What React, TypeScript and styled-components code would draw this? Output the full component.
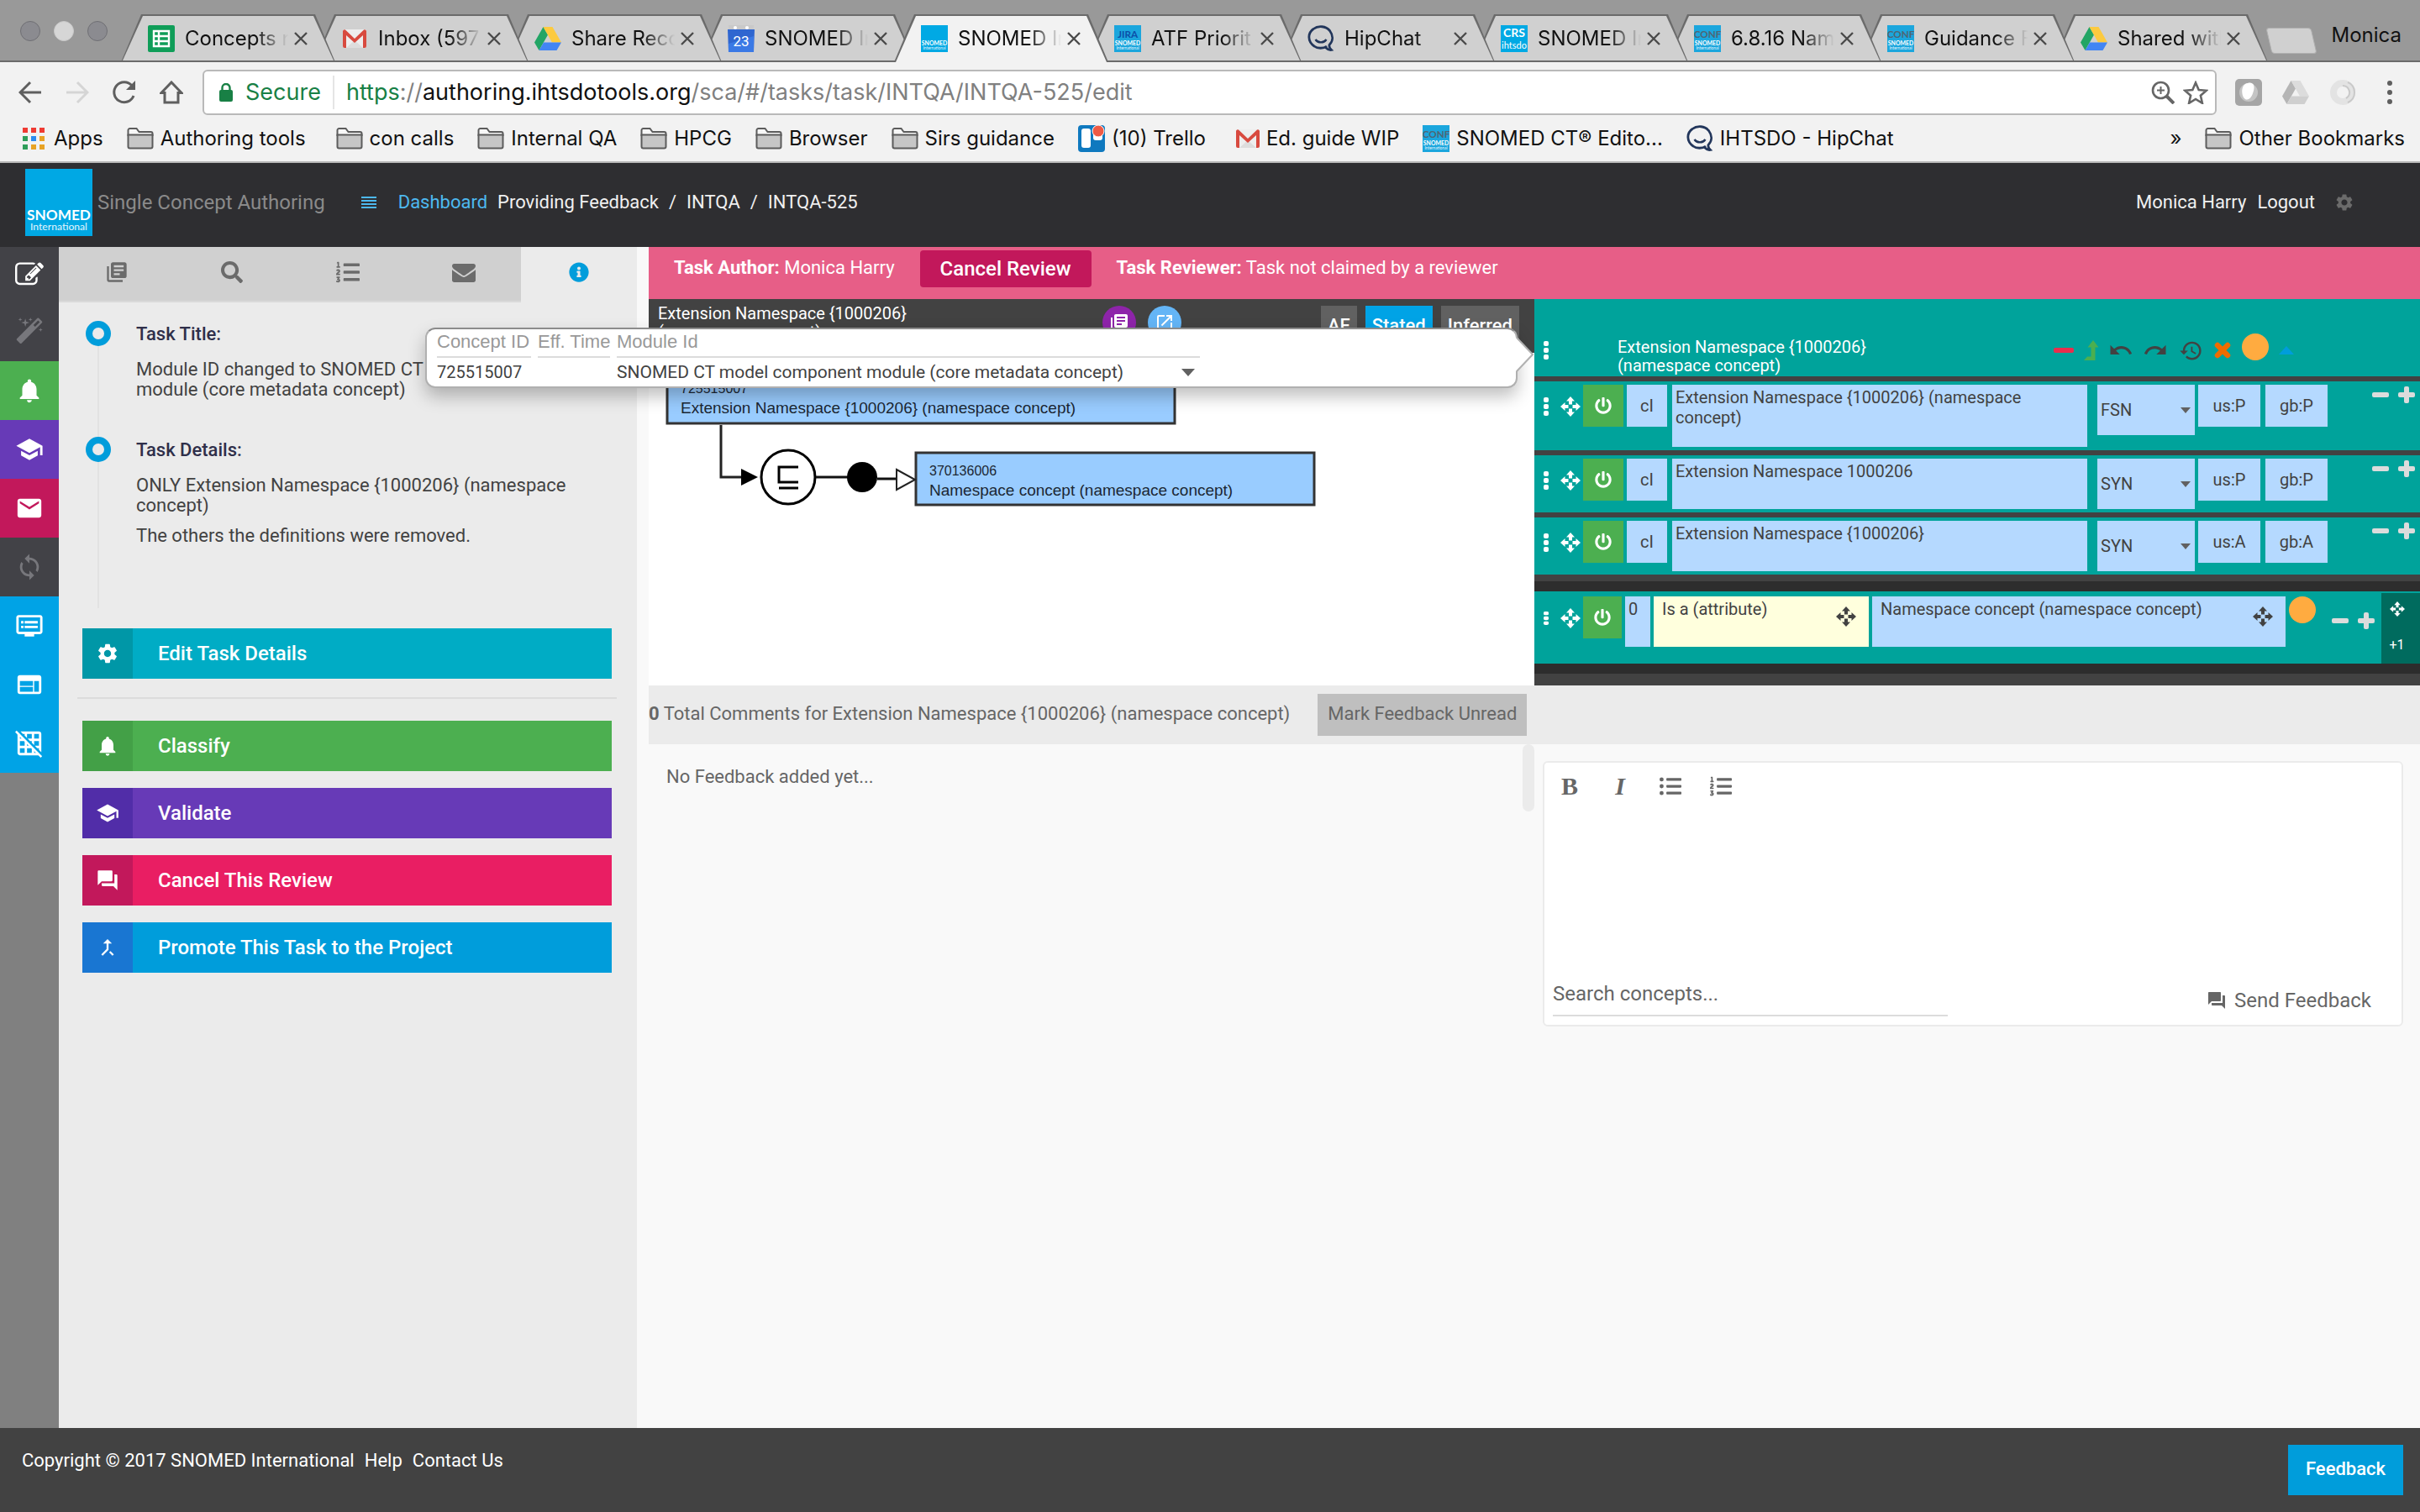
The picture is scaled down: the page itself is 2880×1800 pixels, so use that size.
import React from "react";
import styled, { createGlobalStyle } from "styled-components";
import {
  MdCallMerge,
  MdDvr,
  MdEmail,
  MdGridOff,
  MdHistory,
  MdLibraryBooks,
  MdNotifications,
  MdOpenInNew,
  MdQuestionAnswer,
  MdRedo,
  MdSchool,
  MdSettings,
  MdSync,
  MdUndo,
  MdWeb,
} from "react-icons/md";
import { FaInfoCircle, FaListOl, FaListUl, FaPowerOff, FaSearch } from "react-icons/fa";

const color = {
  teal: "#00a39b",
  tealDark: "#006b5e",
  green: "#4caf50",
  purple: "#673ab7",
  pink: "#c2185b",
  blue: "#00a3e6",
  field: "#b5d9ff",
  ink: "#424242",
  night: "#2d2d2d",
  panel: "#ebebeb",
};

const roboto = `Roboto, "Liberation Sans", sans-serif`;
const inter = `Inter, Roboto, sans-serif`;

const GlobalStyle = createGlobalStyle`
  *, *::before, *::after { box-sizing: border-box; }
  body { margin: 0; background: #f9f9f9; font-family: ${roboto}; font-size: 22px; line-height: 24px; color: ${color.ink}; }
  button, input, select, textarea { font: inherit; color: inherit; border: 0; border-radius: 0; margin: 0; padding: 0; background: none; outline: none; }
  button { display: inline-flex; align-items: center; justify-content: center; flex: none; white-space: nowrap; cursor: pointer; }
  a { color: inherit; text-decoration: none; }
  svg { display: block; flex: none; }
  p, h1, h2, h3, ul { margin: 0; padding: 0; list-style: none; font-size: inherit; font-weight: inherit; }
`;

const Page = styled.div`
  display: flex;
  flex-direction: column;
  min-height: 100vh;
`;

/* ---------- browser window ---------- */

const Chrome = styled.header`
  font-family: ${inter};
  color: #111;
  background: #f2f2f2;
`;

const TabStrip = styled.div`
  display: flex;
  align-items: flex-end;
  height: 74px;
  background: #999;
  box-shadow: inset 0 -2px 0 #6b6b6b;
`;

const Lights = styled.div`
  display: flex;
  gap: 16px;
  align-self: center;
  width: 169px;
  padding-left: 24px;
`;

const Light = styled.span<{ $fill: string; $edge: string }>`
  width: 24px;
  height: 24px;
  border-radius: 50%;
  border: 1px solid ${(p) => p.$edge};
  background: ${(p) => p.$fill};
`;

const Tab = styled.div<{ $active?: boolean; $z: number }>`
  position: relative;
  z-index: ${(p) => p.$z};
  display: flex;
  align-items: center;
  width: 255px;
  height: 57px;
  margin-left: -25px;
  padding: 0 33px 0 32px;
  font-size: 24px;
  background: #6b6b6b;
  clip-path: polygon(24px 0, 231px 0, 255px 100%, 0 100%);
  &::before {
    content: "";
    position: absolute;
    inset: 0;
    z-index: -1;
    background: ${(p) => (p.$active ? "#f2f2f2" : "#d0d0d0")};
    clip-path: polygon(
      26px 2px,
      229px 2px,
      253px ${(p) => (p.$active ? "100%" : "calc(100% - 2px)")},
      2px ${(p) => (p.$active ? "100%" : "calc(100% - 2px)")}
    );
  }
`;

const TabIcon = styled.span`
  display: grid;
  place-items: center;
  flex: none;
  width: 32px;
  height: 32px;
`;

const TabLabel = styled.span`
  flex: 1;
  min-width: 0;
  padding-left: 12px;
  margin-right: 4px;
  overflow: hidden;
  white-space: nowrap;
  line-height: 32px;
  mask-image: linear-gradient(to right, #000 70%, transparent 98%);
`;

const CloseButton = styled.button`
  width: 16px;
  height: 16px;
`;

const NewTab = styled.button`
  width: 54px;
  height: 31px;
  margin: 0 0 10px 1px;
  border-radius: 4px;
  background: #d0d0d0;
  border: 1px solid #b0b0b0;
  transform: skewX(13deg);
`;

const ProfileName = styled.span`
  margin: 0 22px 12px auto;
  font-size: 24px;
  line-height: 40px;
`;

const Toolbar = styled.div`
  display: flex;
  align-items: center;
  height: 72px;
  padding: 0 20px;
`;

const NavButtons = styled.div`
  display: flex;
  width: 221px;
`;

const NavButton = styled.button`
  width: 32px;
  height: 32px;
  margin-right: 24px;
`;

const Omnibox = styled.div`
  display: flex;
  align-items: center;
  flex: 1;
  height: 54px;
  padding: 0 8px 0 18px;
  border: 2px solid #b9b9b9;
  border-radius: 6px;
  background: #fff;
  font-size: 27px;
`;

const Secure = styled.span`
  padding: 0 14px 0 15px;
  color: #188045;
  line-height: 40px;
  border-right: 2px solid #e5e5e5;
`;

const Url = styled.span`
  flex: 1;
  padding-left: 14px;
  color: #808080;
  line-height: 40px;
  b { font-weight: 400; color: #111; }
  i { font-style: normal; color: #188045; }
`;

const OmniIcons = styled.div`
  display: flex;
  gap: 10px;
`;

const Extensions = styled.div`
  display: flex;
  align-items: center;
  gap: 24px;
  padding-left: 22px;
`;

const Bookmarks = styled.nav`
  display: flex;
  align-items: center;
  gap: 28px;
  height: 48px;
  padding: 0 18px 8px 24px;
  font-size: 24px;
  border-bottom: 2px solid #b9b9b9;
`;

const Bookmark = styled.a<{ $push?: boolean; $wide?: boolean }>`
  display: flex;
  align-items: center;
  gap: 8px;
  line-height: 32px;
  white-space: nowrap;
  margin-right: ${(p) => (p.$wide ? "8px" : "0")};
  margin-left: ${(p) => (p.$push ? "auto" : "0")};
`;

/* ---------- application header ---------- */

const AppBar = styled.header`
  display: flex;
  align-items: center;
  height: 100px;
  padding: 0 78px 6px 30px;
  background: #2e2e31;
  color: #f0f0f0;
`;

const Brand = styled.h1`
  margin: 0 43px 0 6px;
  font-size: 24px;
  color: #8a8a8a;
`;

const Crumbs = styled.nav`
  display: flex;
  gap: 12px;
  margin-left: 26px;
  white-space: pre;
`;

const DashboardLink = styled.a`
  color: #4db9f0;
`;

const UserLinks = styled.div`
  display: flex;
  align-items: center;
  gap: 13px;
  margin-left: auto;
  button { margin-left: 10px; }
`;

/* ---------- workspace ---------- */

const Workspace = styled.div`
  display: flex;
  flex: 1;
`;

const Rail = styled.nav`
  display: flex;
  flex-direction: column;
  width: 70px;
  flex: none;
  background: #808080;
`;

const RailItem = styled.button<{ $bg: string; $fg?: string; $short?: boolean }>`
  height: ${(p) => (p.$short ? "66px" : "70px")};
  background: ${(p) => p.$bg};
  color: ${(p) => p.$fg ?? "#fff"};
`;

const Sidebar = styled.aside`
  width: 688px;
  flex: none;
  background: ${color.panel};
`;

const SideTabs = styled.div`
  display: grid;
  grid-template-columns: repeat(5, 1fr);
`;

const SideTab = styled.button<{ $active?: boolean }>`
  height: 66px;
  padding-bottom: 4px;
  background: ${(p) => (p.$active ? color.panel : "#d0d0d0")};
  border-bottom: 2px solid ${(p) => (p.$active ? color.panel : "#dadada")};
  color: ${(p) => (p.$active ? "#009ddb" : "#6b6b6b")};
`;

const Timeline = styled.ul`
  padding: 22px 30px 24px 32px;
`;

const TimelineItem = styled.li<{ $tall?: boolean }>`
  display: flex;
  gap: 30px;
  min-height: ${(p) => (p.$tall ? "204px" : "138px")};
  background: linear-gradient(#e2e2e2, #e2e2e2) 14px 0 / 2px 100% no-repeat;
`;

const Ring = styled.span`
  flex: none;
  width: 30px;
  height: 30px;
  border: 8px solid #009ddb;
  border-radius: 50%;
  background: ${color.panel};
`;

const ItemTitle = styled.h2`
  font-weight: 500;
  line-height: 32px;
  margin-bottom: 14px;
  color: #2f2f4a;
`;

const ItemText = styled.p`
  margin-bottom: 12px;
`;

const ActionList = styled.div`
  display: flex;
  flex-direction: column;
  gap: 20px;
  padding: 0 30px 0 28px;
`;

const Divider = styled.hr`
  width: calc(100% + 12px);
  height: 2px;
  margin: 2px -6px 6px;
  border: 0;
  background: #dcdcdc;
`;

const ActionButton = styled.button<{ $bg: string; $cell: string }>`
  justify-content: flex-start;
  gap: 30px;
  height: 60px;
  font-size: 24px;
  font-weight: 500;
  color: #fff;
  background: ${(p) => p.$bg};
  span {
    display: grid;
    place-items: center;
    width: 60px;
    height: 60px;
    background: ${(p) => p.$cell};
  }
`;

const Content = styled.main`
  flex: 1;
  min-width: 0;
  margin-left: 14px;
`;

const ReviewBar = styled.div`
  display: flex;
  align-items: flex-start;
  gap: 30px;
  height: 62px;
  padding: 4px 30px;
  background: #e75e87;
  color: #fff;
  line-height: 42px;
  b { font-weight: 700; }
`;

const CancelReview = styled.button`
  height: 44px;
  padding: 0 24px;
  border-radius: 4px;
  background: ${color.pink};
  font-size: 24px;
  font-weight: 500;
`;

const Columns = styled.div`
  display: grid;
  grid-template-columns: 1fr 1fr;
`;

const DiagramPanel = styled.section`
  display: flex;
  flex-direction: column;
  background: #fff;
`;

const DiagramHead = styled.div`
  display: flex;
  align-items: flex-start;
  gap: 10px;
  height: 64px;
  padding: 8px 18px 0 11px;
  background: ${color.ink};
  color: #fff;
  overflow: hidden;
`;

const HeadTitle = styled.h2`
  margin-top: -2px;
  width: 320px;
  font-size: 20px;
  line-height: 22px;
  color: #fff;
`;

const RoundButtons = styled.div`
  display: flex;
  gap: 14px;
  margin: 0 156px 0 auto;
`;

const RoundButton = styled.button<{ $bg: string }>`
  width: 40px;
  height: 40px;
  border-radius: 50%;
  background: ${(p) => p.$bg};
  color: #fff;
`;

const ViewButton = styled.button<{ $active?: boolean }>`
  height: 48px;
  padding: 0 8px;
  font-weight: 500;
  background: ${(p) => (p.$active ? color.blue : "#616161")};
`;

const ConceptPanel = styled.section`
  position: relative;
  background: ${color.ink};
  font-size: 20px;
`;

const ConceptHead = styled.div`
  display: flex;
  align-items: center;
  height: 92px;
  padding: 30px 150px 0 0;
  background: ${color.teal};
`;

const Grip = styled.span`
  display: flex;
  justify-content: center;
  flex: none;
  width: 27px;
`;

const TitleSlot = styled.div`
  margin-left: 72px;
  padding-top: 16px;
`;

const ConceptTools = styled.div`
  display: flex;
  align-items: center;
  gap: 12px;
  margin-left: auto;
  color: ${color.ink};
`;

const ToolButton = styled.button<{ $w: number }>`
  width: ${(p) => p.$w}px;
  height: 32px;
`;

const StatusSlot = styled.span`
  padding-bottom: 8px;
`;

const DescriptionRow = styled.div`
  display: flex;
  align-items: flex-start;
  gap: 4px;
  padding: 4px 6px 4px 0;
  margin-top: 6px;
  background: ${color.teal};
`;

const Handles = styled.div`
  display: flex;
  align-items: center;
  gap: 4px;
  flex: none;
  width: 54px;
  height: 50px;
  padding-top: 2px;
  color: #fff;
`;

const PowerButton = styled.button<{ $w: number }>`
  width: ${(p) => p.$w}px;
  height: 50px;
  background: ${color.green};
  color: #fff;
`;

const Chip = styled.button<{ $w: number; $gap?: boolean }>`
  width: ${(p) => p.$w}px;
  height: 50px;
  margin-right: ${(p) => (p.$gap ? "2px" : "0")};
  background: ${color.field};
`;

const TermField = styled.textarea<{ $tall?: boolean }>`
  display: block;
  flex: 1;
  min-width: 0;
  height: ${(p) => (p.$tall ? "74px" : "60px")};
  margin-right: 8px;
  padding: 3px 4px;
  resize: none;
  overflow: hidden;
  line-height: 24px;
  background: ${color.field};
`;

const SelectBox = styled.div`
  display: grid;
  flex: none;
  width: 116px;
  align-items: center;
  background: ${color.field};
  > * { grid-area: 1 / 1; }
  svg { justify-self: end; margin-right: 5px; pointer-events: none; }
`;

const Select = styled.select`
  appearance: none;
  width: 100%;
  height: 60px;
  padding-left: 4px;
`;

const RowTools = styled.div<{ $low?: boolean }>`
  display: flex;
  flex: none;
  gap: 11px;
  justify-content: flex-end;
  width: ${(p) => (p.$low ? "70px" : "100px")};
  padding-top: ${(p) => (p.$low ? "19px" : "2px")};
  padding-right: ${(p) => (p.$low ? "4px" : "0")};
`;

const RelationBand = styled.div`
  margin-top: 8px;
  margin-bottom: 14px;
  padding: 12px 0;
  background: ${color.night};
`;

const RelationRow = styled.div`
  display: flex;
  align-items: flex-start;
  gap: 4px;
  height: 86px;
  padding-top: 6px;
  background: ${color.teal};
`;

const GroupInput = styled.input`
  width: 30px;
  height: 60px;
  padding: 0 0 30px 4px;
  background: ${color.field};
`;

const SlotBox = styled.div<{ $bg: string; $w?: number }>`
  display: flex;
  align-items: flex-start;
  height: 60px;
  flex: ${(p) => (p.$w ? `none` : "1")};
  width: ${(p) => (p.$w ? `${p.$w}px` : "auto")};
  min-width: 0;
  padding: 0 15px 0 10px;
  background: ${(p) => p.$bg};
`;

const SlotInput = styled.input`
  flex: 1;
  min-width: 0;
  height: 30px;
`;

const SlotHandle = styled.span`
  padding-top: 12px;
`;

const Dot = styled.span`
  display: block;
  flex: none;
  width: 32px;
  height: 32px;
  border-radius: 50%;
  background: #ffab40;
`;

const GroupCell = styled.div`
  display: flex;
  flex-direction: column;
  align-items: center;
  gap: 22px;
  flex: none;
  width: 46px;
  height: 84px;
  margin-top: -4px;
  padding: 10px 9px 0 0;
  background: ${color.tealDark};
  color: #fff;
  font-size: 16px;
`;

const Popover = styled.div`
  position: absolute;
  z-index: 5;
  top: 34px;
  right: calc(100% + 20px);
  width: 1300px;
  height: 72px;
  padding: 0 8px;
  border: 2px solid #b0b0b0;
  border-top-color: #8c8c8c;
  border-radius: 12px;
  background: #fff;
  box-shadow: 0 10px 20px rgba(0, 0, 0, 0.25);
`;

const PopoverArrow = styled.svg`
  position: absolute;
  top: 8px;
  right: -21px;
`;

const ModuleTable = styled.table`
  width: 924px;
  margin-left: -4px;
  border-collapse: separate;
  border-spacing: 8px 0;
  table-layout: fixed;
  color: ${color.ink};
  th {
    height: 34px;
    padding: 0 0 2px;
    text-align: left;
    white-space: nowrap;
    font: 400 22px/24px "Liberation Sans", Arial, sans-serif;
    color: #999;
    border-bottom: 2px solid #dcdcdc;
  }
  td {
    height: 34px;
    padding: 0;
    font-size: 20px;
  }
`;

const ModuleSelect = styled.div`
  display: grid;
  align-items: center;
  font-size: 21px;
  > * { grid-area: 1 / 1; }
  select { appearance: none; width: 100%; height: 32px; }
  svg { justify-self: end; margin-right: 6px; pointer-events: none; }
`;

/* ---------- feedback ---------- */

const FeedbackHead = styled.div`
  display: flex;
  align-items: center;
  gap: 33px;
  height: 70px;
  background: ${color.panel};
  color: #666;
  p { padding-bottom: 2px; }
`;

const MarkButton = styled.button`
  height: 50px;
  padding: 0 12px 2px;
  background: #bfbfbf;
`;

const FeedbackList = styled.div`
  display: flex;
  justify-content: space-between;
  align-items: flex-start;
  color: #666;
  padding-left: 21px;
  p { padding-top: 27px; }
`;

const ScrollThumb = styled.span`
  width: 14px;
  height: 80px;
  border-radius: 7px;
  background: #ebebeb;
`;

const Composer = styled.form`
  display: flex;
  flex-direction: column;
  margin: 20px 20px 0 10px;
  padding: 0 10px 10px;
  border: 2px solid #ebebeb;
  border-radius: 6px;
  background: #fff;
  color: #666;
`;

const EditorTools = styled.div`
  display: flex;
  align-items: center;
  height: 56px;
  gap: 32px;
  padding-left: 6px;
`;

const FormatButton = styled.button<{ $italic?: boolean }>`
  min-width: 28px;
  font-family: "Liberation Serif", serif;
  font-size: 30px;
  line-height: 32px;
  font-weight: 700;
  font-style: ${(p) => (p.$italic ? "italic" : "normal")};
`;

const MessageArea = styled.textarea`
  height: 190px;
  resize: none;
`;

const ComposerFoot = styled.div`
  display: flex;
  align-items: flex-start;
  justify-content: space-between;
  font-size: 24px;
`;

const SearchField = styled.input`
  width: 470px;
  height: 56px;
  padding-top: 4px;
  border-bottom: 2px solid #dcdcdc;
  &::placeholder { color: #666; opacity: 1; }
`;

const SendButton = styled.button`
  gap: 9px;
  margin: 18px 26px 0 0;
  height: 38px;
`;

const Footer = styled.footer`
  display: flex;
  align-items: center;
  gap: 12px;
  height: 100px;
  padding: 0 20px 0 26px;
  background: ${color.ink};
  color: #fff;
  > span, > a { padding-bottom: 22px; }
`;

const FeedbackButton = styled.button`
  height: 60px;
  margin-left: auto;
  padding: 0 21px 2px;
  font-weight: 500;
  background: #009ddb;
`;

/* ---------- drawings ---------- */

const XMark = () => (
  <svg width="16" height="16" viewBox="0 0 16 16">
    <path d="M1 1l14 14M15 1L1 15" stroke="#4a4a4a" strokeWidth="2.4" />
  </svg>
);

const Folder = () => (
  <svg width="32" height="28" viewBox="0 0 32 28">
    <path d="M1.5 7V4a2 2 0 0 1 2-2h8l3 4h14a2 2 0 0 1 2 2v2H1.5z" fill="#f7f7f7" stroke="#5c5c5c" strokeWidth="2" />
    <path d="M1.5 9.500h29v14a2 2 0 0 1-2 2h-25a2 2 0 0 1-2-2z" fill="#c6c6c6" stroke="#5c5c5c" strokeWidth="2" />
  </svg>
);

const Sheets = () => (
  <svg width="32" height="32" viewBox="0 0 32 32">
    <rect width="32" height="32" rx="2" fill="#0f9d58" />
    <path d="M7 7h18v18H7zM7 13h18M7 19h18M13 7v18" fill="none" stroke="#fff" strokeWidth="2.400" />
  </svg>
);

const Gmail = () => (
  <svg width="28" height="22" viewBox="0 0 28 22">
    <rect width="28" height="22" rx="2" fill="#eee" />
    <path d="M4 22l10-9 10 9z" fill="#ddd" />
    <path d="M0 2a2 2 0 0 1 3-1.500L14 11 25 .5A2 2 0 0 1 28 2v18a2 2 0 0 1-2 2h-2V7L14 16 4 7v15H2a2 2 0 0 1-2-2z" fill="#d84a3f" />
  </svg>
);

const Drive = ({ gray = false }) => (
  <svg width="32" height="28" viewBox="0 0 32 28">
    <path d="M10.500 0L0 18.500 5.500 28 16 9.500z" fill={gray ? "#b5b5b5" : "#22a565"} />
    <path d="M10.500 0h11L32 18.500H21z" fill={gray ? "#dcdcdc" : "#fcca3f"} />
    <path d="M11 18.500h21L26.500 28h-21z" fill={gray ? "#cfcfcf" : "#4285f4"} />
  </svg>
);

const Calendar = () => (
  <svg width="32" height="32" viewBox="0 0 32 32">
    <path d="M1 0h30v6H1z" fill="#c9c9c9" />
    <circle cx="9" cy="3" r="2" fill="#fff" />
    <circle cx="23" cy="3" r="2" fill="#fff" />
    <path d="M0 5h32l-1 27H1z" fill="#2f66d0" />
    <path d="M1 22l30-9v19H1z" fill="#4285f4" opacity=".6" />
    <text x="16" y="25" textAnchor="middle" fontFamily="Roboto, sans-serif" fontSize="17" fill="#fff">23</text>
  </svg>
);

type MarkProps = { size?: number; top?: string; topColor?: string; bg?: string };

const SnomedMark = ({ size = 32, top, topColor = "#fff", bg = "#00a9e4" }: MarkProps) => (
  <svg width={size} height={size} viewBox="0 0 79 79">
    <rect width="79" height="79" fill={bg} />
    {top && (
      <text x="39.500" y="37" textAnchor="middle" fontFamily="Lato, sans-serif" fontWeight="700" fontSize="29" fill={topColor}>{top}</text>
    )}
    <text x="39.500" y="60" textAnchor="middle" fontFamily="Lato, sans-serif" fontWeight="700" fontSize="17" fill="#fff">SNOMED</text>
    <text x="39.500" y="72" textAnchor="middle" fontFamily="Lato, sans-serif" fontSize="12" fill="#e5f6fd">International</text>
  </svg>
);

const Conf = () => <SnomedMark top="CONF" topColor="#4f6573" bg="#1ba6dd" />;

const CrsMark = () => (
  <svg width="32" height="32" viewBox="0 0 32 32">
    <rect width="32" height="32" fill="#00a9e4" />
    <text x="16" y="14" textAnchor="middle" fontFamily="Lato, sans-serif" fontWeight="700" fontSize="14" fill="#fff">CRS</text>
    <text x="16" y="28" textAnchor="middle" fontFamily="Lato, sans-serif" fontSize="11" fill="#fff">ihtsdo</text>
  </svg>
);

const HipChat = () => (
  <svg width="32" height="32" viewBox="0 0 32 32" fill="none" stroke="#22365b" strokeWidth="3">
    <path d="M23 25C19 28 12 28 8 25C0 19.500 0 9.500 7 4.500C13 0 22 1 26.500 6.500C31 12.500 30.500 19 26 23.500C25.500 25.500 26.500 27.500 28.500 29.500C26 30 23.500 28.500 21.500 26.500" strokeWidth="2.800" />
    <path d="M9.500 17c3 4.500 10 4.500 13 0" strokeWidth="2.400" />
  </svg>
);

const Trello = () => (
  <svg width="32" height="32" viewBox="0 0 32 32">
    <rect width="32" height="32" rx="4" fill="#0f79bf" />
    <rect x="4" y="4" width="11" height="23" rx="3" fill="#fff" />
    <rect x="18" y="4" width="11" height="14" rx="3" fill="#fff" />
    <circle cx="24" cy="7" r="7" fill="#ee5a45" stroke="#fff" strokeWidth="1" />
  </svg>
);

const AppsGrid = () => (
  <svg width="32" height="32" viewBox="0 0 32 32">
    {["#ef3b33", "#ef3b33", "#ef3b33", "#2f9e5a", "#2d8cf0", "#e8a325", "#2f9e5a", "#e8a325", "#e8a325"].map((c, i) => (
      <rect key={i} x={3 + (i % 3) * 10} y={3 + Math.floor(i / 3) * 10} width="6" height="6" fill={c} />
    ))}
  </svg>
);

const MoveIcon = ({ size = 24 }: { size?: number }) => (
  <svg width={size} height={size} viewBox="0 0 24 24" fill="currentColor">
    {[0, 90, 180, 270].map((a) => (
      <path key={a} d="M12 0l5 5.500h-3v4h-4v-4H7z" transform={`rotate(${a} 12 12)`} />
    ))}
  </svg>
);

const DotsIcon = ({ small = false }: { small?: boolean }) => (
  <svg width="6" height={small ? 16 : 22} viewBox="0 0 6 22" preserveAspectRatio="none" fill="#fff">
    <rect width="6" height="6" rx="2" />
    <rect y="8" width="6" height="6" rx="2" />
    <rect y="16" width="6" height="6" rx="2" />
  </svg>
);

const Glyph = ({ size, d }: { size: number; d: string }) => (
  <svg width={size} height={size} viewBox="0 0 1792 1792" fill="currentColor">
    <path d={d} />
  </svg>
);

const pencilSquare =
  "M888 1184l116-116-152-152-116 116v56h96v96h56zm440-720q-16-16-33 1l-350 350q-17 17-1 33t33-1l350-350q17-17 1-33zm80 594v190q0 119-84.5 203.5t-203.5 84.5h-832q-119 0-203.5-84.5t-84.5-203.5v-832q0-119 84.5-203.5t203.5-84.5h832q63 0 117 25 15 7 18 23 3 17-9 29l-49 49q-14 14-32 8-23-6-45-6h-832q-66 0-113 47t-47 113v832q0 66 47 113t113 47h832q66 0 113-47t47-113v-126q0-13 9-22l64-64q15-15 35-7t20 29zm-96-738l288 288-672 672h-288v-288zm444 132l-92 92-288-288 92-92q28-28 68-28t68 28l152 152q28 28 28 68t-28 68z";
const magicWand =
  "M1254 581l293-293-107-107-293 293zm447-293q0 27-18 45l-1286 1286q-18 18-45 18t-45-18l-198-198q-18-18-18-45t18-45l1286-1286q18-18 45-18t45 18l198 198q18 18 18 45zm-1351-190l98 30-98 30-30 98-30-98-98-30 98-30 30-98zm350 162l196 60-196 60-60 196-60-196-196-60 196-60 60-196zm930 478l98 30-98 30-30 98-30-98-98-30 98-30 30-98zm-640-640l98 30-98 30-30 98-30-98-98-30 98-30 30-98z";
const envelope =
  "M1792 710v794q0 66-47 113t-113 47h-1472q-66 0-113-47t-47-113v-794q44 49 101 87 362 246 497 345 57 42 92.500 65.500t94.500 48 110 24.500h2q51 0 110-24.500t94.500-48 92.500-65.500q170-123 498-345 57-39 100-87zm0-294q0 79-49 151t-122 123q-376 261-468 325-10 7-42.500 31t-54 38.500-52 32.500-57.500 27-50 9h-2q-23 0-50-9t-57.500-27-52-32.500-54-38.500-42.500-31q-91-64-262-182.500t-205-142.500q-62-42-117-115.500t-55-136.500q0-78 41.500-130t118.500-52h1472q65 0 112.500 47t47.500 113z";

const Caret = ({ w = 12, h = 7, c = "#616161" }) => (
  <svg width={w} height={h} viewBox="0 0 12 7" preserveAspectRatio="none">
    <path d="M0 0h12L6 7z" fill={c} />
  </svg>
);

const Minus = ({ w = 20, c = "#dcdcdc" }) => (
  <svg width={w} height="20" viewBox={`0 0 ${w} 20`}>
    <rect y="7" width={w} height="6" rx="2" fill={c} />
  </svg>
);

const Plus = () => (
  <svg width="20" height="20" viewBox="0 0 20 20" fill="#dcdcdc">
    <rect y="7" width="20" height="6" rx="2" />
    <rect x="7" width="6" height="20" rx="2" />
  </svg>
);

const Diagram = () => (
  <svg width="820" height="200" viewBox="0 0 820 200" fontFamily="'Liberation Sans', Arial, sans-serif" fill="#1c2733">
    <g stroke="#333" strokeWidth="3" fill="#99ccff">
      <rect x="22" y="19" width="604" height="65" />
      <rect x="318" y="119" width="474" height="62" />
    </g>
    <text x="38" y="48" fontSize="16">725515007</text>
    <text x="38" y="72" fontSize="19">Extension Namespace {"{1000206}"} (namespace concept)</text>
    <text x="334" y="146" fontSize="16">370136006</text>
    <text x="334" y="170" fontSize="19">Namespace concept (namespace concept)</text>
    <path d="M86 86v62h26" fill="none" stroke="#222" strokeWidth="3" />
    <path d="M110 138l20 10-20 10z" fill="#000" />
    <circle cx="166" cy="148" r="32" fill="#fff" stroke="#000" strokeWidth="3" />
    <path d="M178 136h-23v18h23M155 161h23" fill="none" stroke="#000" strokeWidth="3" />
    <path d="M199 148h38M272 150h24" stroke="#111" strokeWidth="3" />
    <circle cx="254" cy="148" r="18" fill="#000" />
    <path d="M295 139l22 12-22 12z" fill="#fff" stroke="#222" strokeWidth="2" />
  </svg>
);

/* ---------- data ---------- */

const tabs = [
  { icon: <Sheets />, label: "Concepts n" },
  { icon: <Gmail />, label: "Inbox (597" },
  { icon: <Drive />, label: "Share Reco" },
  { icon: <Calendar />, label: "SNOMED In" },
  { icon: <SnomedMark />, label: "SNOMED In", active: true },
  { icon: <SnomedMark top="JIRA" topColor="#0b4fa8" bg="#1ba6dd" />, label: "ATF Priorit" },
  { icon: <HipChat />, label: "HipChat" },
  { icon: <CrsMark />, label: "SNOMED In" },
  { icon: <Conf />, label: "6.8.16 Nam" },
  { icon: <Conf />, label: "Guidance F" },
  { icon: <Drive />, label: "Shared with" },
];

const bookmarks = [
  { icon: <AppsGrid />, label: "Apps" },
  { icon: <Folder />, label: "Authoring tools", wide: true },
  { icon: <Folder />, label: "con calls" },
  { icon: <Folder />, label: "Internal QA" },
  { icon: <Folder />, label: "HPCG" },
  { icon: <Folder />, label: "Browser" },
  { icon: <Folder />, label: "Sirs guidance" },
  { icon: <Trello />, label: "(10) Trello", wide: true },
  { icon: <Gmail />, label: "Ed. guide WIP" },
  { icon: <Conf />, label: "SNOMED CT® Edito..." },
  { icon: <HipChat />, label: "IHTSDO - HipChat" },
];

const railItems = [
  { name: "Edit", bg: "#424247", icon: <Glyph size={34} d={pencilSquare} />, short: true },
  { name: "Wizard", bg: "#424247", fg: "#77777c", icon: <Glyph size={34} d={magicWand} /> },
  { name: "Classification", bg: color.green, icon: <MdNotifications size={34} /> },
  { name: "Validation", bg: color.purple, icon: <MdSchool size={34} /> },
  { name: "Messages", bg: color.pink, icon: <MdEmail size={34} /> },
  { name: "Sync", bg: "#424247", fg: "#77777c", icon: <MdSync size={34} /> },
  { name: "List", bg: color.blue, icon: <MdDvr size={34} /> },
  { name: "Layout", bg: color.blue, icon: <MdWeb size={34} /> },
  { name: "Hide models", bg: color.blue, icon: <MdGridOff size={34} /> },
];

const sideTabs = [
  { name: "Saved", icon: <MdLibraryBooks size={28} /> },
  { name: "Search", icon: <FaSearch size={26} /> },
  { name: "List", icon: <FaListOl size={28} /> },
  { name: "Feedback", icon: <Glyph size={28} d={envelope} /> },
  { name: "Info", icon: <FaInfoCircle size={24} />, active: true },
];

const actions = [
  { label: "Classify", bg: color.green, cell: "#43a047", icon: <MdNotifications size={28} /> },
  { label: "Validate", bg: color.purple, cell: "#512da8", icon: <MdSchool size={28} /> },
  { label: "Cancel This Review", bg: "#e91e63", cell: color.pink, icon: <MdQuestionAnswer size={28} /> },
  { label: "Promote This Task to the Project", bg: "#009ddb", cell: "#1976d2", icon: <MdCallMerge size={28} /> },
];

const descriptions = [
  { term: "Extension Namespace {1000206} (namespace concept)", type: "FSN", us: "us:P", gb: "gb:P", tall: true },
  { term: "Extension Namespace 1000206", type: "SYN", us: "us:P", gb: "gb:P" },
  { term: "Extension Namespace {1000206}", type: "SYN", us: "us:A", gb: "gb:A" },
];

/* ---------- sections ---------- */

const BrowserChrome = () => (
  <Chrome>
    <TabStrip>
      <Lights>
        <Light $fill="#8b8b90" $edge="#6f6f74" />
        <Light $fill="#d6d6d6" $edge="#c8c8c8" />
        <Light $fill="#8b8b90" $edge="#6f6f74" />
      </Lights>
      {tabs.map((t, i) => (
        <Tab key={i} $active={t.active} $z={t.active ? 30 : 20 - i}>
          <TabIcon>{t.icon}</TabIcon>
          <TabLabel>{t.label}</TabLabel>
          <CloseButton aria-label="Close tab">
            <XMark />
          </CloseButton>
        </Tab>
      ))}
      <NewTab aria-label="New tab" />
      <ProfileName>Monica</ProfileName>
    </TabStrip>
    <Toolbar>
      <NavButtons>
        <NavButton aria-label="Back">
          <svg width="28" height="28" viewBox="0 0 28 28" fill="none" stroke="#5f5f5f" strokeWidth="3">
            <path d="M27 14H3M14 2L2 14l12 12" />
          </svg>
        </NavButton>
        <NavButton aria-label="Forward">
          <svg width="28" height="28" viewBox="0 0 28 28" fill="none" stroke="#d5d5d5" strokeWidth="3">
            <path d="M1 14h24M14 2l12 12-12 12" />
          </svg>
        </NavButton>
        <NavButton aria-label="Reload">
          <svg width="30" height="30" viewBox="0 0 30 30">
            <path d="M26 19A12 12 0 1 1 24 7" fill="none" stroke="#5f5f5f" strokeWidth="3" />
            <path d="M28 1v11H17z" fill="#5f5f5f" />
          </svg>
        </NavButton>
        <NavButton aria-label="Home">
          <svg width="28" height="28" viewBox="0 0 28 28" fill="none" stroke="#5f5f5f" strokeWidth="3">
            <path d="M2 14.500L14 2l12 12.500h-4V26H6V14.500z" />
          </svg>
        </NavButton>
      </NavButtons>
      <Omnibox>
        <svg width="16" height="22" viewBox="0 0 16 22">
          <rect y="8" width="16" height="14" rx="2" fill="#188045" />
          <path d="M3.500 9V5.500a4.500 4.500 0 0 1 9 0V9" fill="none" stroke="#188045" strokeWidth="2.400" />
        </svg>
        <Secure>Secure</Secure>
        <Url>
          <i>https</i>://<b>authoring.ihtsdotools.org</b>/sca/#/tasks/task/INTQA/INTQA-525/edit
        </Url>
        <OmniIcons>
          <svg width="28" height="28" viewBox="0 0 28 28" fill="none" stroke="#666" strokeWidth="2.600">
            <circle cx="11.500" cy="11.500" r="9.500" />
            <path d="M18.500 18.500L27 27" strokeWidth="4" />
            <path d="M11.500 7v9M7 11.500h9" strokeWidth="2" />
          </svg>
          <svg width="30" height="28" viewBox="0 0 30 28" fill="none" stroke="#666" strokeWidth="2.600">
            <path d="M15 2.500l3.700 8.500 9 .8-6.800 6 2 9L15 22l-7.900 4.800 2-9-6.800-6 9-.8z" />
          </svg>
        </OmniIcons>
      </Omnibox>
      <Extensions>
        <svg width="32" height="32" viewBox="0 0 32 32">
          <rect width="32" height="32" rx="5" fill="#a5a5a5" />
          <circle cx="16" cy="16" r="11" fill="#c4c4c4" />
          <path d="M12 6c8-4 12 0 10 8s-6 12-10 10-6-14 0-18z" fill="#fff" />
        </svg>
        <Drive gray />
        <svg width="32" height="32" viewBox="0 0 32 32" fill="none">
          <circle cx="16" cy="16" r="11" stroke="#e3e3e3" strokeWidth="8" />
          <path d="M16 8a8 8 0 0 1 4 15M22 4a13 13 0 0 1 0 24" stroke="#c9c9c9" strokeWidth="2" />
        </svg>
        <svg width="32" height="32" viewBox="0 0 32 32" fill="#5f5f5f">
          <circle cx="16" cy="5" r="3" />
          <circle cx="16" cy="16" r="3" />
          <circle cx="16" cy="27" r="3" />
        </svg>
      </Extensions>
    </Toolbar>
    <Bookmarks>
      {bookmarks.map((b, i) => (
        <Bookmark key={i} href="#" $wide={b.wide}>
          {b.icon}
          {b.label}
        </Bookmark>
      ))}
      <Bookmark href="#" $push>»</Bookmark>
      <Bookmark href="#">
        <Folder />
        Other Bookmarks
      </Bookmark>
    </Bookmarks>
  </Chrome>
);

const ConceptPopover = () => (
  <Popover>
    <ModuleTable>
      <colgroup>
        <col width="112" />
        <col width="86" />
        <col />
      </colgroup>
      <thead>
        <tr>
          <th>Concept ID</th>
          <th>Eff. Time</th>
          <th>Module Id</th>
        </tr>
      </thead>
      <tbody>
        <tr>
          <td>725515007</td>
          <td />
          <td>
            <ModuleSelect>
              <select aria-label="Module Id">
                <option>SNOMED CT model component module (core metadata concept)</option>
              </select>
              <Caret w={16} h={9} />
            </ModuleSelect>
          </td>
        </tr>
      </tbody>
    </ModuleTable>
    <PopoverArrow width="21" height="44" viewBox="0 0 21 44">
      <path d="M0 2L20 22 0 42z" fill="#fff" />
      <path d="M1 2L20 22 1 42" fill="none" stroke="#b0b0b0" strokeWidth="2" />
    </PopoverArrow>
  </Popover>
);

const HandlePair = ({ small = false }: { small?: boolean }) => (
  <Handles>
    <Grip>
      <DotsIcon small={small} />
    </Grip>
    <MoveIcon />
  </Handles>
);

const ConceptEditor = () => (
  <ConceptPanel>
    <ConceptHead>
      <Grip>
        <DotsIcon />
      </Grip>
      <TitleSlot>
        <HeadTitle>Extension Namespace {"{1000206}"} (namespace concept)</HeadTitle>
      </TitleSlot>
      <ConceptTools>
        <ToolButton $w={24} aria-label="Remove"><Minus w={24} c="#e92e4d" /></ToolButton>
        <ToolButton $w={18} aria-label="Promote">
          <svg width="18" height="24" viewBox="0 0 18 24" fill="#4caf50">
            <path d="M11 0l6.500 8.500h-4V24H0l4-4.500h4.500v-11h-4z" />
          </svg>
        </ToolButton>
        <ToolButton $w={28} aria-label="Undo"><MdUndo size={30} /></ToolButton>
        <ToolButton $w={30} aria-label="Redo"><MdRedo size={30} /></ToolButton>
        <ToolButton $w={30} aria-label="History"><MdHistory size={29} /></ToolButton>
        <ToolButton $w={22} aria-label="Delete">
          <svg width="20" height="20" viewBox="0 0 20 20">
            <path d="M4 4l12 12M16 4L4 16" stroke="#ef6c00" strokeWidth="6.500" strokeLinecap="round" />
          </svg>
        </ToolButton>
        <StatusSlot><Dot /></StatusSlot>
        <ToolButton $w={18} aria-label="Collapse">
          <svg width="18" height="10" viewBox="0 0 18 10"><path d="M0 10L9 0l9 10z" fill="#009ddb" /></svg>
        </ToolButton>
      </ConceptTools>
    </ConceptHead>
    {descriptions.map((d, i) => (
      <DescriptionRow key={i}>
        <HandlePair />
        <PowerButton $w={48} aria-label="Toggle active"><FaPowerOff size={20} /></PowerButton>
        <Chip $w={48} $gap>cI</Chip>
        <TermField $tall={d.tall} aria-label="Term" defaultValue={d.term} spellCheck={false} />
        <SelectBox>
          <Select aria-label="Description type" defaultValue={d.type}>
            <option>{d.type}</option>
          </Select>
          <Caret />
        </SelectBox>
        <Chip $w={74} $gap>{d.us}</Chip>
        <Chip $w={74}>{d.gb}</Chip>
        <RowTools>
          <button aria-label="Remove description"><Minus /></button>
          <button aria-label="Add description"><Plus /></button>
        </RowTools>
      </DescriptionRow>
    ))}
    <RelationBand>
      <RelationRow>
        <HandlePair small />
        <PowerButton $w={46} aria-label="Toggle active"><FaPowerOff size={20} /></PowerButton>
        <GroupInput aria-label="Group" defaultValue="0" />
        <SlotBox $bg="#ffffdd" $w={256}>
          <SlotInput aria-label="Attribute" defaultValue="Is a (attribute)" />
          <SlotHandle><MoveIcon /></SlotHandle>
        </SlotBox>
        <SlotBox $bg={color.field}>
          <SlotInput aria-label="Target" defaultValue="Namespace concept (namespace concept)" />
          <SlotHandle><MoveIcon /></SlotHandle>
        </SlotBox>
        <Dot />
        <RowTools $low>
          <button aria-label="Remove relationship"><Minus /></button>
          <button aria-label="Add relationship"><Plus /></button>
        </RowTools>
        <GroupCell>
          <MoveIcon size={18} />
          +1
        </GroupCell>
      </RelationRow>
    </RelationBand>
    <ConceptPopover />
  </ConceptPanel>
);

export default function App() {
  return (
    <Page>
      <GlobalStyle />
      <BrowserChrome />
      <AppBar>
        <SnomedMark size={80} bg="#00a8e4" />
        <Brand>Single Concept Authoring</Brand>
        <svg width="18" height="16" viewBox="0 0 18 16" fill="#4db9f0">
          <path d="M0 1h18v2H0zM0 5h18v2H0zM0 9h18v2H0zM0 13h18v2H0z" />
        </svg>
        <Crumbs>
          <DashboardLink href="#">Dashboard</DashboardLink>
          <span>Providing Feedback</span>
          <span>/</span>
          <span>INTQA</span>
          <span>/</span>
          <span>INTQA-525</span>
        </Crumbs>
        <UserLinks>
          <span>Monica Harry</span>
          <a href="#">Logout</a>
          <button aria-label="Settings"><MdSettings size={24} color="#6b6b6b" /></button>
        </UserLinks>
      </AppBar>
      <Workspace>
        <Rail>
          {railItems.map((r) => (
            <RailItem key={r.name} aria-label={r.name} $bg={r.bg} $fg={r.fg} $short={r.short}>
              {r.icon}
            </RailItem>
          ))}
        </Rail>
        <Sidebar>
          <SideTabs>
            {sideTabs.map((t) => (
              <SideTab key={t.name} aria-label={t.name} $active={t.active}>
                {t.icon}
              </SideTab>
            ))}
          </SideTabs>
          <Timeline>
            <TimelineItem>
              <Ring />
              <div>
                <ItemTitle>Task Title:</ItemTitle>
                <ItemText>Module ID changed to SNOMED CT model component module (core metadata concept)</ItemText>
              </div>
            </TimelineItem>
            <TimelineItem $tall>
              <Ring />
              <div>
                <ItemTitle>Task Details:</ItemTitle>
                <ItemText>ONLY Extension Namespace {"{1000206}"} (namespace concept)</ItemText>
                <ItemText>The others the definitions were removed.</ItemText>
              </div>
            </TimelineItem>
          </Timeline>
          <ActionList>
            <ActionButton $bg="#00acc5" $cell="#0097a7">
              <span><MdSettings size={28} /></span>
              Edit Task Details
            </ActionButton>
            <Divider />
            {actions.map((a) => (
              <ActionButton key={a.label} $bg={a.bg} $cell={a.cell}>
                <span>{a.icon}</span>
                {a.label}
              </ActionButton>
            ))}
          </ActionList>
        </Sidebar>
        <Content>
          <ReviewBar>
            <span><b>Task Author:</b> Monica Harry</span>
            <CancelReview>Cancel Review</CancelReview>
            <span><b>Task Reviewer:</b> Task not claimed by a reviewer</span>
          </ReviewBar>
          <Columns>
            <DiagramPanel>
              <DiagramHead>
                <HeadTitle>Extension Namespace {"{1000206}"} (namespace concept)</HeadTitle>
                <RoundButtons>
                  <RoundButton $bg="#8e24aa" aria-label="Saved concepts"><MdLibraryBooks size={24} /></RoundButton>
                  <RoundButton $bg="#64b5f6" aria-label="Open"><MdOpenInNew size={24} /></RoundButton>
                </RoundButtons>
                <ViewButton>AF</ViewButton>
                <ViewButton $active>Stated</ViewButton>
                <ViewButton>Inferred</ViewButton>
              </DiagramHead>
              <Diagram />
            </DiagramPanel>
            <ConceptEditor />
          </Columns>
          <FeedbackHead>
            <p><b>0</b> Total Comments for Extension Namespace {"{1000206}"} (namespace concept)</p>
            <MarkButton>Mark Feedback Unread</MarkButton>
          </FeedbackHead>
          <Columns>
            <FeedbackList>
              <p>No Feedback added yet...</p>
              <ScrollThumb />
            </FeedbackList>
            <Composer>
              <EditorTools>
                <FormatButton type="button" aria-label="Bold">B</FormatButton>
                <FormatButton type="button" $italic aria-label="Italic">I</FormatButton>
                <FormatButton type="button" aria-label="Bulleted list"><FaListUl size={26} /></FormatButton>
                <FormatButton type="button" aria-label="Numbered list"><FaListOl size={26} /></FormatButton>
              </EditorTools>
              <MessageArea aria-label="Feedback" />
              <ComposerFoot>
                <SearchField aria-label="Search concepts" placeholder="Search concepts..." />
                <SendButton type="button"><MdQuestionAnswer size={24} />Send Feedback</SendButton>
              </ComposerFoot>
            </Composer>
          </Columns>
        </Content>
      </Workspace>
      <Footer>
        <span>Copyright © 2017 SNOMED International</span>
        <a href="#">Help</a>
        <a href="#">Contact Us</a>
        <FeedbackButton>Feedback</FeedbackButton>
      </Footer>
    </Page>
  );
}
